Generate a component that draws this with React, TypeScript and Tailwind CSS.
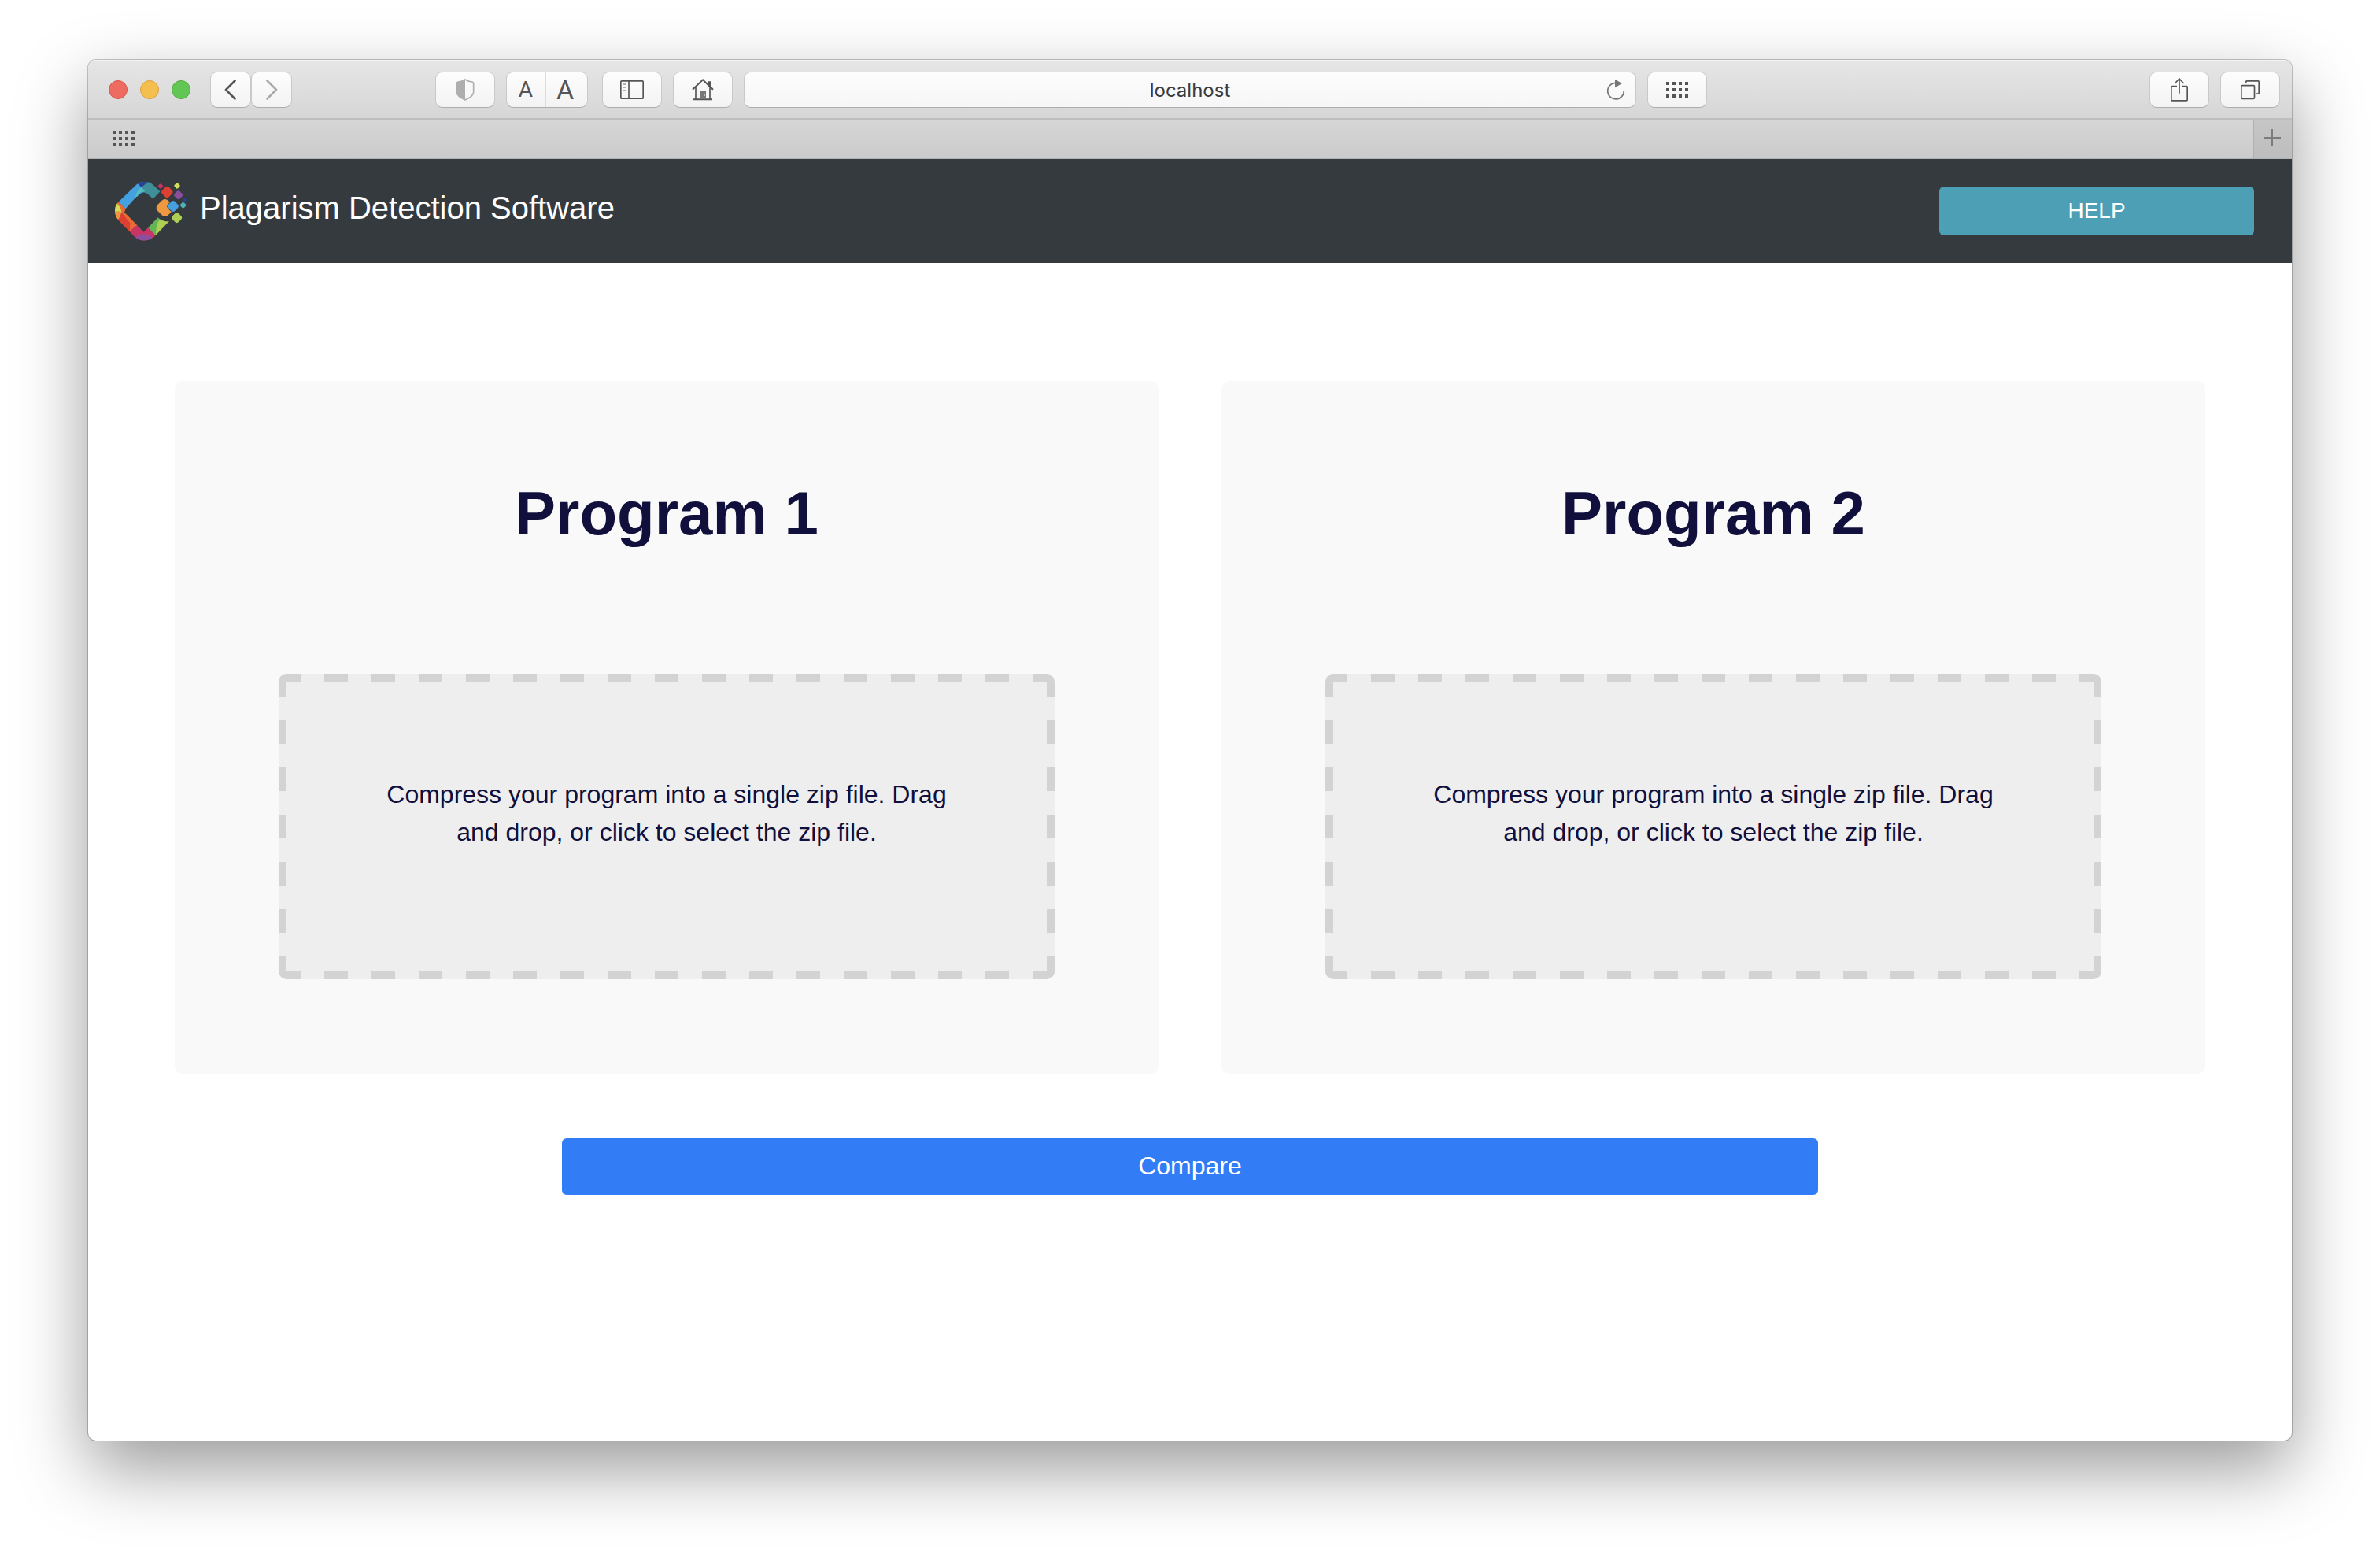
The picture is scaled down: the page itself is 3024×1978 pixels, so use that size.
import type { ReactNode } from "react";

const toolButton =
  "flex h-[46px] items-center justify-center rounded-[9px] border border-[#c9c9c9] border-b-[#adadad] bg-linear-to-b from-[#fdfdfd] to-[#f3f3f3]";

function ToolButton({ label, children }: { label: string; children: ReactNode }) {
  return (
    <button type="button" aria-label={label} className={`${toolButton} w-19`}>
      {children}
    </button>
  );
}

function GridDots() {
  return (
    <svg width="28" height="20" viewBox="0 0 28 20" fill="#555" shapeRendering="crispEdges" aria-hidden="true">
      {[0, 8, 16].map((y) => [0, 8, 16, 24].map((x) => <rect key={`${x}-${y}`} x={x} y={y} width="4" height="4" />))}
    </svg>
  );
}

function Diamond({ x, y, r, fill }: { x: number; y: number; r: number; fill: string }) {
  const h = r * 0.86;
  return (
    <rect x={x - h} y={y - h} width={h * 2} height={h * 2} rx={r * 0.52} fill={fill} transform={`rotate(45 ${x} ${y})`} />
  );
}

function Logo() {
  return (
    <svg width="94" height="76" viewBox="42 61 282 228" aria-hidden="true">
      <defs>
        <clipPath id="ring">
          <path d="M220 101 L195 77 Q185 64 160 64 Q143 63 132 73 L62 140 Q48 152 48 175 Q48 196 62 210 L108 257 Q130 288 159 288 Q186 288 205 266 L255 214 Q231 219 212 200 L177 236 Q158 252 139 236 L98 193 Q83 176 95 160 L141 112 Q158 97 173 110 L193 129 Z" />
        </clipPath>
        <clipPath id="bite">
          <path clipRule="evenodd" d="M190 110 H290 V220 H190 Z M247 157 Q247 152 251 148 L263 136 L290 136 V178 L263 178 L251 167 Q247 163 247 157 Z" />
        </clipPath>
      </defs>
      <g clipPath="url(#ring)">
        <path d="M40 50 H180 V120 H130 L89 167 L57 137 L40 150 Z" fill="#45a0df" />
        <path d="M148 84 L175 60 H240 V140 H190 L158 102 Z" fill="#3f8f9b" />
        <path d="M130 66 L140 55 H170 L176 66 Q160 72 149 85 Z" fill="#2b3f96" />
        <path d="M149 85 L163 100 L145 104 L126 126 Q128 98 149 85 Z" fill="#55bfb9" />
        <path d="M57 137 L89 167 L84 180 L135 230 L104 256 L40 215 V140 Z" fill="#e66b35" />
        <path d="M73 179 Q80 190 106 221 L104 256 L58 208 Z" fill="#dd3f32" />
        <path d="M40 178 Q60 172 73 179 Q70 196 60 209 L40 205 Z" fill="#ef9540" />
        <path d="M54 146 Q71 160 73 180 Q60 172 40 180 V150 Z" fill="#d6dd5c" />
        <path d="M132 229 L104 252 V300 H215 L205 266 L174 238 L158 255 Z" fill="#c73465" />
        <ellipse cx="158" cy="287" rx="34" ry="24" fill="#8b4f9e" />
        <path d="M174 238 L212 196 L240 215 L203 268 Z" fill="#62b556" />
        <path d="M220 207 Q202 225 205 268 L265 214 Z" fill="#aecf55" />
      </g>
      <g clipPath="url(#bite)">
        <Diamond x={239} y={163} r={33} fill="#ee983f" />
      </g>
      <Diamond x={222} y={80} r={9} fill="#c73465" />
      <Diamond x={285} y={79} r={11} fill="#d6dd5c" />
      <Diamond x={247} y={103} r={21} fill="#dd3f32" />
      <Diamond x={290} y={114} r={16} fill="#8b4f9e" />
      <Diamond x={314} y={133} r={7} fill="#2b3f96" />
      <Diamond x={308} y={153} r={11} fill="#4fb0b5" />
      <Diamond x={270} y={157} r={20} fill="#45a0df" />
      <Diamond x={284} y={201} r={19} fill="#aecf55" />
    </svg>
  );
}

function Toolbar() {
  return (
    <div className="grid h-19 grid-cols-[1fr_40.5%_1fr] items-center border-b-2 border-[#bebebe] bg-linear-to-b from-[#e6e6e6] to-[#d6d6d6] pt-0.5 shadow-[inset_0_2px_0_#f3f3f3]">
      <div className="flex items-center pr-3.5 pl-[26px]">
        <div className="flex gap-4">
          <button type="button" aria-label="Close" className="size-6 rounded-full border border-[#dc5248] bg-[#ed6b60]" />
          <button type="button" aria-label="Minimize" className="size-6 rounded-full border border-[#d9a13e] bg-[#f5bf4f]" />
          <button type="button" aria-label="Zoom" className="size-6 rounded-full border border-[#53a93f] bg-[#62c655]" />
        </div>
        <div className="ml-[25px] flex">
          <button type="button" aria-label="Back" className={`${toolButton} w-[52px]`}>
            <svg width="16" height="26" viewBox="0 0 16 26" fill="none" stroke="#555" strokeWidth="2.6" strokeLinecap="round" strokeLinejoin="round" aria-hidden="true">
              <path d="M13.5 1.5 L2 13 L13.5 24.5" />
            </svg>
          </button>
          <button type="button" aria-label="Forward" className={`${toolButton} w-[52px]`}>
            <svg width="16" height="26" viewBox="0 0 16 26" fill="none" stroke="#aaa" strokeWidth="2.6" strokeLinecap="round" strokeLinejoin="round" aria-hidden="true">
              <path d="M2.5 1.5 L14 13 L2.5 24.5" />
            </svg>
          </button>
        </div>
        <div className="ml-auto flex gap-3.5">
          <ToolButton label="Privacy report">
            <svg width="24" height="28" viewBox="116 91 72 84" aria-hidden="true">
              <path d="M152 94 Q164 102 178 103 Q184 104 184 110 V142 Q184 158 152 172 Q120 158 120 142 V110 Q120 104 126 103 Q140 102 152 94 Z" fill="none" stroke="#aeaeae" strokeWidth="5" />
              <path d="M152 94 V172 Q120 158 120 142 V110 Q120 104 126 103 Q140 102 152 94 Z" fill="#aeaeae" />
            </svg>
          </ToolButton>
          <div className="mr-1 flex h-[46px] w-[104px] rounded-[9px] border border-[#c9c9c9] border-b-[#adadad] bg-linear-to-b from-[#fdfdfd] to-[#f3f3f3] font-['Roboto',sans-serif] text-[#555]">
            <button type="button" aria-label="Smaller text" className="flex-1 border-r-2 border-[#dcdcdc] text-[28px] leading-9">
              A
            </button>
            <button type="button" aria-label="Larger text" className="flex-1 pr-1 text-[34px] leading-9">
              A
            </button>
          </div>
          <ToolButton label="Show sidebar">
            <svg width="30" height="24" viewBox="744 96 90 72" fill="none" stroke="#555" strokeWidth="5" aria-hidden="true">
              <rect x="746.5" y="98.500" width="85" height="67" rx="3" />
              <path d="M777 98 V166" />
              <path d="M756 111 H768 M756 123 H768 M756 135 H768" stroke="#999" />
            </svg>
          </ToolButton>
          <ToolButton label="Home">
            <svg width="28" height="30" viewBox="1017 89 84 90" fill="none" stroke="#555" strokeWidth="6" aria-hidden="true">
              <path d="M1020 133 L1059 96 L1098 133" />
              <path d="M1078 102 H1089 V124 L1078 114 Z" fill="#555" stroke="none" />
              <path d="M1032 124 V170 M1086 124 V170" strokeWidth="5" />
              <path d="M1023 171 H1095" />
              <path d="M1047 138 H1071 V170 H1047 Z" fill="#777" stroke="none" />
              <circle cx="1066" cy="155" r="2" fill="#eee" stroke="none" />
            </svg>
          </ToolButton>
        </div>
      </div>
      <div className="flex h-[46px] items-center rounded-[9px] border border-[#c9c9c9] border-b-[#adadad] bg-linear-to-b from-[#fdfdfd] to-[#f6f6f6] pr-2.5 pl-10">
        <input
          type="text"
          aria-label="Address"
          defaultValue="localhost"
          className="h-full min-w-0 flex-1 bg-transparent text-center font-['Inter',sans-serif] text-[24px] text-[#3c3c3c] outline-none"
        />
        <button type="button" aria-label="Reload" className="flex w-[30px] justify-center">
          <svg width="24" height="28" viewBox="186 88 72 84" aria-hidden="true">
            <path d="M253 133 A31 31 0 1 1 219 104" fill="none" stroke="#777" strokeWidth="5" />
            <path d="M219 90 L246 106 L219 122 Z" fill="#777" />
          </svg>
        </button>
      </div>
      <div className="flex items-center pr-[15px] pl-3.5">
        <ToolButton label="Top sites">
          <GridDots />
        </ToolButton>
        <div className="ml-auto flex gap-3.5">
          <ToolButton label="Share">
            <svg width="24" height="32" viewBox="171 112 72 96" fill="none" stroke="#555" strokeWidth="5" aria-hidden="true">
              <path d="M198 147 H179 Q176.500 147 176.500 150 V199 Q176.500 201.500 179 201.500 H235 Q237.500 201.500 237.500 199 V150 Q237.500 147 235 147 H216" />
              <path d="M207 174 V119 M190 136 L207 118 L224 136" />
            </svg>
          </ToolButton>
          <ToolButton label="Show all tabs">
            <svg width="26" height="26" viewBox="438 123 78 78" fill="none" stroke="#555" strokeWidth="5" aria-hidden="true">
              <rect x="443.500" y="146" width="50" height="50" rx="3" />
              <path d="M461.500 138 V131 Q461.500 128.500 464 128.500 H508 Q510.500 128.500 510.500 131 V175 Q510.500 177.500 508 177.500 H501" />
            </svg>
          </ToolButton>
        </div>
      </div>
    </div>
  );
}

function TabBar() {
  return (
    <div className="flex h-[50px] items-stretch justify-between border-b border-[#b0b3b4] bg-linear-to-b from-[#d6d6d6] to-[#cbcbcb]">
      <button type="button" aria-label="Favorites" className="flex items-center pb-px pl-[31px]">
        <GridDots />
      </button>
      <button type="button" aria-label="New tab" className="flex w-[50px] items-center justify-center border-l-2 border-[#b0b0b0] bg-linear-to-b from-[#c6c6c6] to-[#bdbdbd] pr-0.5 pb-[3px]">
        <svg width="22" height="22" viewBox="0 0 22 22" stroke="#7c7c7c" strokeWidth="2" aria-hidden="true">
          <path d="M11 0 V22 M0 11 H22" />
        </svg>
      </button>
    </div>
  );
}

const dashes = [
  "[background-image:linear-gradient(90deg,transparent_15px,#d3d3d3_15px,#d3d3d3_45px,transparent_45px),linear-gradient(90deg,transparent_15px,#d3d3d3_15px,#d3d3d3_45px,transparent_45px),linear-gradient(transparent_15px,#d3d3d3_15px,#d3d3d3_45px,transparent_45px),linear-gradient(transparent_15px,#d3d3d3_15px,#d3d3d3_45px,transparent_45px)]",
  "[background-size:60px_10px,60px_10px,10px_60px,10px_60px]",
  "[background-repeat:repeat-x,repeat-x,repeat-y,repeat-y]",
  "[background-position:center_top,center_bottom,left_center,right_center]",
].join(" ");

function ProgramCard({ id, title }: { id: string; title: string }) {
  return (
    <section className="rounded-[10px] bg-[#f9f9f9] px-33 py-30 text-center text-[#110f3b]">
      <h2 className="text-[78px] leading-24 font-bold">{title}</h2>
      <label
        htmlFor={id}
        className={`relative mt-39 block min-h-[388px] cursor-pointer rounded-[10px] bg-[#eee] px-30 pt-[129px] text-[32px] leading-12 ${dashes}`}
      >
        Compress your program into a single zip file. Drag and drop, or click to select the zip file.
        <input id={id} type="file" accept=".zip" className="sr-only" />
      </label>
    </section>
  );
}

export default function App() {
  return (
    <div className="flex min-h-screen flex-col bg-white px-28 pt-19 pb-37 font-['Liberation_Sans',Arial,sans-serif]">
      <div className="flex flex-1 flex-col overflow-hidden rounded-[10px] bg-white shadow-[0_0_0_1px_rgba(0,0,0,0.22),0_36px_90px_rgba(0,0,0,0.4)]">
        <Toolbar />
        <TabBar />
        <header className="flex h-33 items-center bg-[#353a3e] pr-12 pl-8 text-white">
          <Logo />
          <h1 className="ml-4 pb-2 text-[40px] leading-12">Plagarism Detection Software</h1>
          <button type="button" className="ml-auto h-[62px] w-100 rounded-md bg-[#4c9fb5] text-[28px]">
            HELP
          </button>
        </header>
        <main className="flex flex-col items-center pt-[150px]">
          <div className="grid w-full grid-cols-2 gap-20 px-[110px]">
            <ProgramCard id="program-1" title="Program 1" />
            <ProgramCard id="program-2" title="Program 2" />
          </div>
          <button type="button" className="mt-[82px] h-18 w-[57%] rounded-md bg-[#327cf6] pb-0.5 text-[32px] text-white">
            Compare
          </button>
        </main>
      </div>
    </div>
  );
}
